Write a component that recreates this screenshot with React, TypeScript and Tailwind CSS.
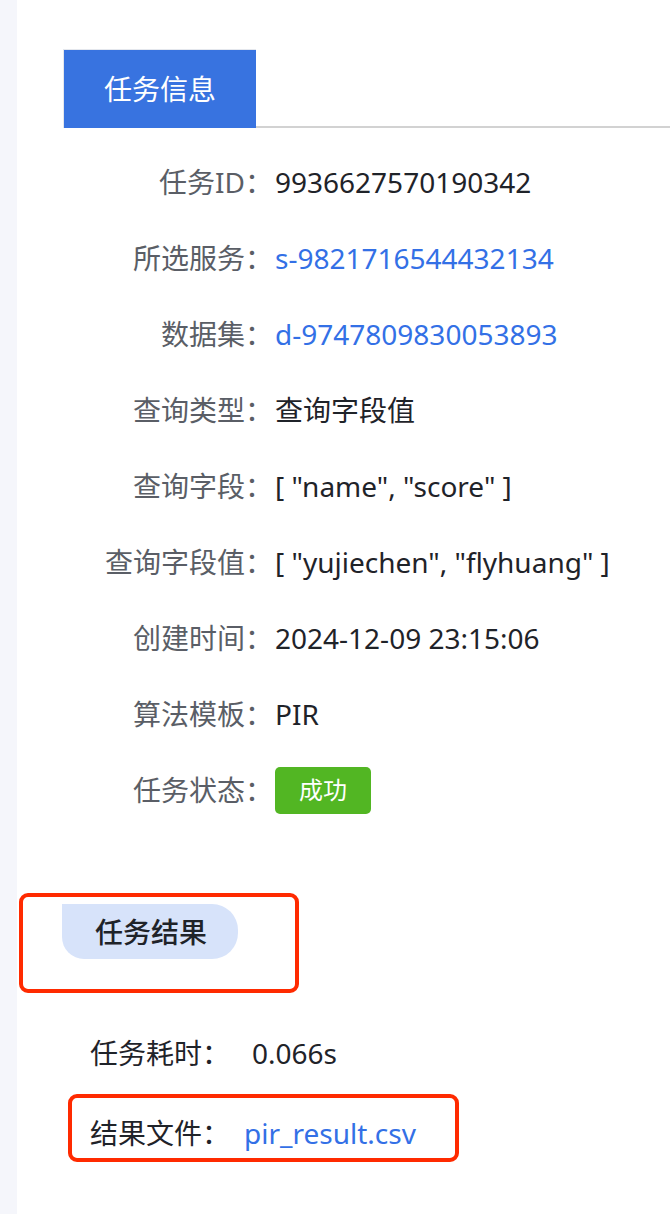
import React from "react";

const font = "font-['Noto_Sans','Noto_Sans_CJK_SC',sans-serif]";

type Row = { label: string; value: React.ReactNode };

const rows: Row[] = [
  { label: "任务ID：", value: <span className="text-[#1f2329]">9936627570190342</span> },
  { label: "所选服务：", value: <span className="text-[#3370e6]">s-9821716544432134</span> },
  { label: "数据集：", value: <span className="text-[#3370e6]">d-9747809830053893</span> },
  { label: "查询类型：", value: <span className="text-[#1f2329]">查询字段值</span> },
  { label: "查询字段：", value: <span className="text-[#1f2329]">[ "name", "score" ]</span> },
  { label: "查询字段值：", value: <span className="text-[#1f2329]">[ "yujiechen", "flyhuang" ]</span> },
  { label: "创建时间：", value: <span className="text-[#1f2329]">2024-12-09 23:15:06</span> },
  { label: "算法模板：", value: <span className="text-[#1f2329]">PIR</span> },
  {
    label: "任务状态：",
    value: (
      <span className="inline-flex h-[47px] w-[96px] items-center justify-center rounded-[5px] bg-[#52b623] text-[24px] text-white">
        成功
      </span>
    ),
  },
];

export default function App() {
  return (
    <div className={`relative flex h-[1214px] w-[670px] overflow-hidden bg-white ${font}`}>
      <div className="w-[17px] shrink-0 bg-[#f5f6fb]" />
      <div className="flex min-w-0 flex-1 flex-col">
        {/* Tabs */}
        <div className="mt-[49px] flex items-end pl-[46px]">
          <div className="flex h-[79px] w-[193px] items-center justify-center border-l border-t border-[#e4e7ed] bg-[#3873e0] text-[28px] text-white">
            任务信息
          </div>
          <div className="flex-1 border-b-2 border-[#d2d2d2]" />
        </div>

        {/* Info rows */}
        <div className="mt-[16px] flex flex-col">
          {rows.map((r) => (
            <div key={r.label} className="flex h-[76px] items-center text-[28px]">
              <div className="w-[256px] shrink-0 text-right text-[#5a5e66]">{r.label}</div>
              <div className="ml-[2px] whitespace-nowrap">{r.value}</div>
            </div>
          ))}
        </div>

        {/* Result section */}
        <div className="mt-[76px] pl-[45px]">
          <div className="flex h-[55px] w-[176px] items-center rounded-bl-[22px] rounded-r-[26px] bg-[#d7e3fa] pl-[33px] text-[28px] font-medium text-[#1f2329]">
            任务结果
          </div>
        </div>

        <div className="mt-[65px] flex flex-col pl-[73px] text-[28px] text-[#1f2329]">
          <div className="flex h-[58px] items-center">
            <span className="w-[162px]">任务耗时：</span>
            <span>0.066s</span>
          </div>
          <div className="mt-[22px] flex h-[58px] items-center">
            <span className="w-[154px]">结果文件：</span>
            <span className="text-[#3370e6]">pir_result.csv</span>
          </div>
        </div>
      </div>

      {/* Annotation boxes */}
      <div className="pointer-events-none absolute left-[19px] top-[893px] h-[100px] w-[280px] rounded-[9px] border-[4px] border-[#ff2a00]" />
      <div className="pointer-events-none absolute left-[68px] top-[1094px] h-[68px] w-[391px] rounded-[9px] border-[4px] border-[#ff2a00]" />
    </div>
  );
}
